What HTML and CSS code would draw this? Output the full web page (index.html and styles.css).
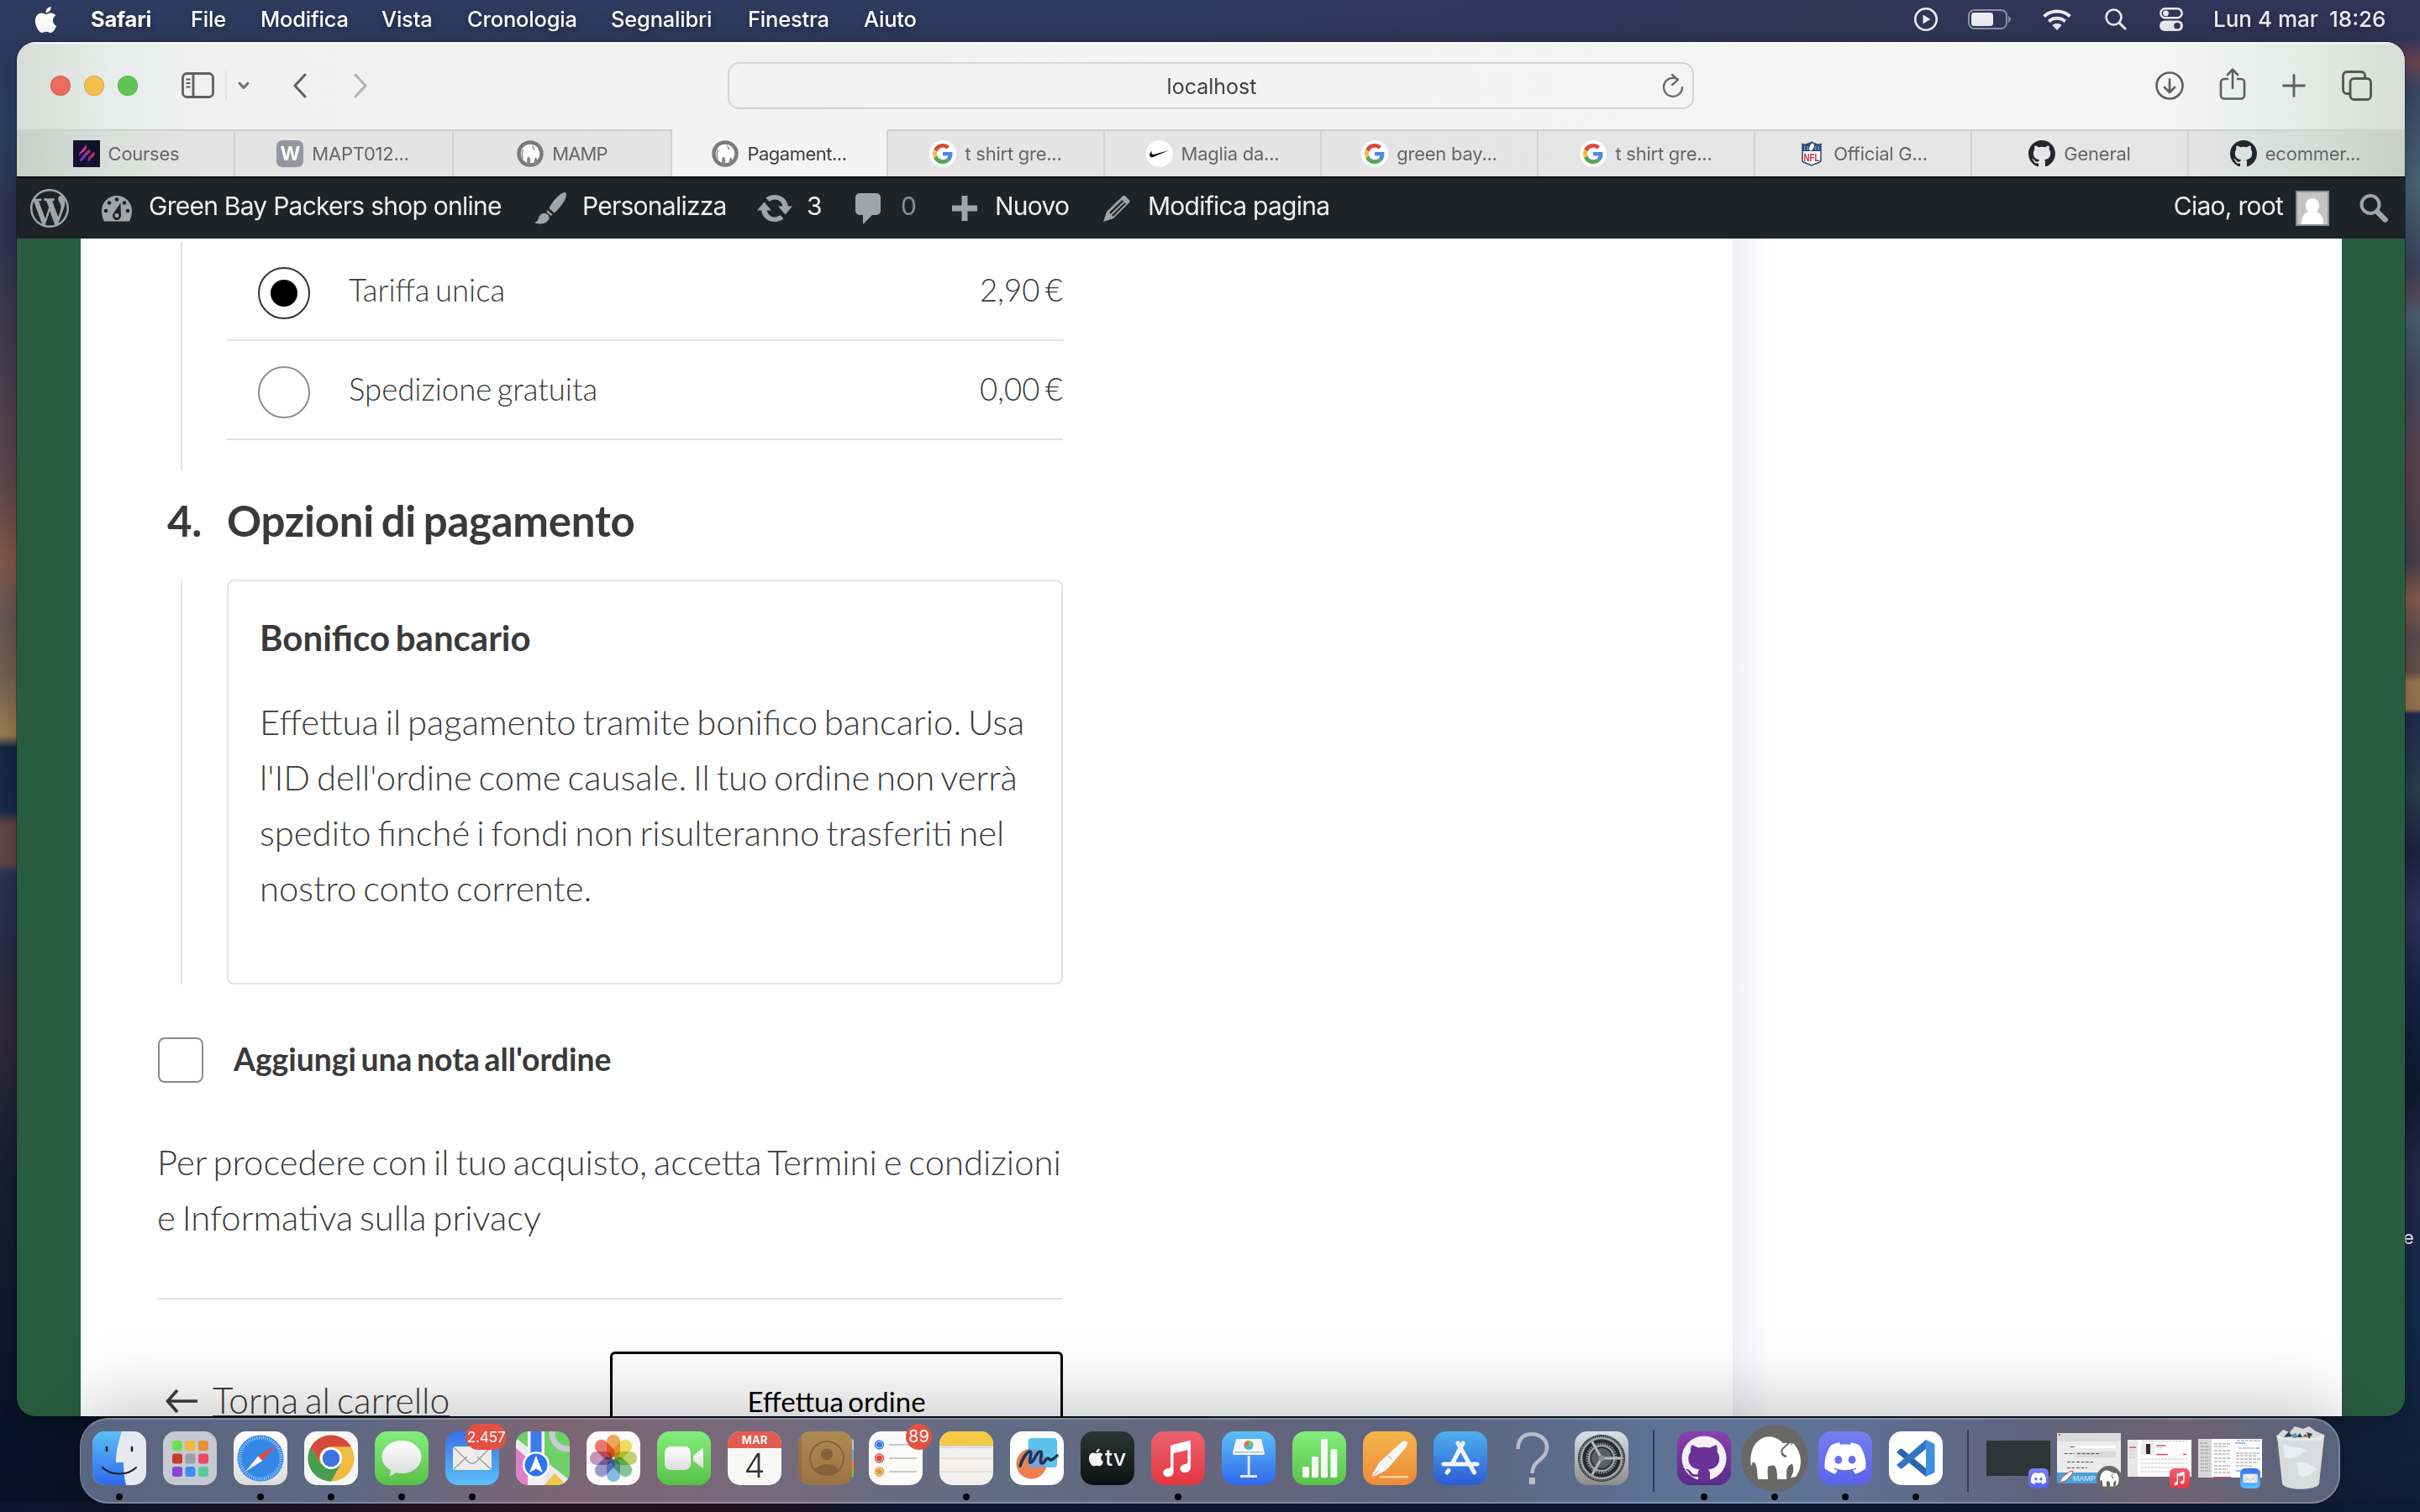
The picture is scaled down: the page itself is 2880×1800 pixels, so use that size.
FILE: index.html
```html
<!DOCTYPE html>
<html lang="it">
<head>
<meta charset="utf-8">
<title>Pagamento – Green Bay Packers shop online</title>
<link rel="stylesheet" href="styles.css">
</head>
<body>
<svg class="sprite" aria-hidden="true">
  <defs>
    <linearGradient id="g-green" x2="0" y2="1"><stop stop-color="#83ee7c"/><stop offset="1" stop-color="#58c148"/></linearGradient>
    <linearGradient id="g-blue" x2="0" y2="1"><stop stop-color="#3a6fe8"/><stop offset="1" stop-color="#5cc0f8"/></linearGradient>
    <linearGradient id="g-sky" x2="0" y2="1"><stop stop-color="#5bbff8"/><stop offset="1" stop-color="#3068ec"/></linearGradient>
    <linearGradient id="g-white" x2="0" y2="1"><stop stop-color="#ffffff"/><stop offset="1" stop-color="#dcdcdc"/></linearGradient>
    <linearGradient id="g-red" x2="0" y2="1"><stop stop-color="#ec6272"/><stop offset="1" stop-color="#e4363e"/></linearGradient>
    <linearGradient id="g-indigo" x2="0" y2="1"><stop stop-color="#7480f0"/><stop offset="1" stop-color="#5a62ea"/></linearGradient>
    <linearGradient id="g-orange" x2="0" y2="1"><stop stop-color="#f3b64b"/><stop offset="1" stop-color="#ed8b39"/></linearGradient>
    <linearGradient id="g-purple" x2="0" y2="1"><stop stop-color="#8a3fb0"/><stop offset="1" stop-color="#5a2c86"/></linearGradient>
    <linearGradient id="g-brown" x2="0" y2="1"><stop stop-color="#b08a53"/><stop offset="1" stop-color="#9a7342"/></linearGradient>
    <linearGradient id="g-steel" x2="0" y2="1"><stop stop-color="#d5e0e6"/><stop offset="1" stop-color="#8f8d8a"/></linearGradient>
    <linearGradient id="g-black" x2="0" y2="1"><stop stop-color="#2b3632"/><stop offset="1" stop-color="#0c1012"/></linearGradient>
    <linearGradient id="g-store" x2="0" y2="1"><stop stop-color="#4fb0ee"/><stop offset="1" stop-color="#2c5bd4"/></linearGradient>
    <clipPath id="tile"><rect width="64" height="64" rx="15"/></clipPath>
  </defs>
  <symbol id="apple" viewBox="0 0 24 24"><path d="M12.152 6.896c-.948 0-2.415-1.078-3.96-1.04-2.04.027-3.91 1.183-4.961 3.014-2.117 3.675-.546 9.103 1.519 12.09 1.013 1.454 2.208 3.09 3.792 3.039 1.52-.065 2.09-.987 3.935-.987 1.831 0 2.35.987 3.96.948 1.637-.026 2.676-1.48 3.676-2.948 1.156-1.688 1.636-3.325 1.662-3.415-.039-.013-3.182-1.221-3.22-4.857-.026-3.04 2.48-4.494 2.597-4.559-1.429-2.09-3.623-2.324-4.39-2.376-2-.156-3.675 1.09-4.61 1.09zM15.53 3.83c.843-1.012 1.4-2.427 1.245-3.83-1.207.052-2.662.805-3.532 1.818-.78.896-1.454 2.338-1.273 3.714 1.338.104 2.715-.688 3.559-1.701"/></symbol>
  <symbol id="google" viewBox="0 0 32 32">
    <circle cx="16" cy="16" r="16" fill="#fff"/>
    <g transform="translate(4 4) scale(.5)">
      <path fill="#d94b3d" d="M24 9.5c3.54 0 6.71 1.22 9.21 3.6l6.85-6.85C35.9 2.38 30.47 0 24 0 14.62 0 6.51 5.38 2.56 13.22l7.98 6.19C12.43 13.72 17.74 9.5 24 9.5z"/>
      <path fill="#5186ec" d="M46.98 24.55c0-1.57-.15-3.09-.38-4.55H24v9.02h12.94c-.58 2.96-2.26 5.48-4.78 7.18l7.73 6c4.51-4.18 7.09-10.36 7.09-17.65z"/>
      <path fill="#f2bd42" d="M10.53 28.59c-.48-1.45-.76-2.99-.76-4.59s.27-3.14.76-4.59l-7.98-6.19C.92 16.46 0 20.12 0 24c0 3.88.92 7.54 2.56 10.78l7.97-6.19z"/>
      <path fill="#58a55c" d="M24 48c6.48 0 11.93-2.13 15.89-5.81l-7.73-6c-2.15 1.45-4.92 2.3-8.16 2.3-6.26 0-11.57-4.22-13.47-9.91l-7.98 6.19C6.51 42.62 14.62 48 24 48z"/>
    </g>
  </symbol>
  <symbol id="github" viewBox="0 0 16 16"><path d="M8 0C3.58 0 0 3.58 0 8c0 3.54 2.29 6.53 5.47 7.59.4.07.55-.17.55-.38 0-.19-.01-.82-.01-1.49-2.01.37-2.53-.49-2.69-.94-.09-.23-.48-.94-.82-1.13-.28-.15-.68-.52-.01-.53.63-.01 1.08.58 1.23.82.72 1.21 1.87.87 2.33.66.07-.52.28-.87.51-1.07-1.78-.2-3.64-.89-3.64-3.95 0-.87.31-1.59.82-2.15-.08-.2-.36-1.02.08-2.12 0 0 .67-.21 2.2.82.64-.18 1.32-.27 2-.27s1.36.09 2 .27c1.53-1.04 2.2-.82 2.2-.82.44 1.1.16 1.92.08 2.12.51.56.82 1.27.82 2.15 0 3.07-1.87 3.75-3.65 3.95.29.25.54.73.54 1.48 0 1.07-.01 1.93-.01 2.2 0 .21.15.46.55.38A8.01 8.01 0 0 0 16 8c0-4.42-3.58-8-8-8z"/></symbol>
  <symbol id="elephant" viewBox="0 0 80 80">
    <circle cx="40" cy="40" r="40" fill="#686866"/>
    <path fill="#fff" d="M12 50C9 33 16 19 28 15c8-2 15 1 21 6l-2 8c-1 5 2 9 6 10 2-8 5-13 9-17 5 5 9 13 9 22 0 7-2 13-6 18l-6 1c4-6 4-12 2-16-3 0-5 2-6 5-2 5 0 9-1 13H43c0-6 0-12-3-16-3-1-6 0-8 1-1 5 0 10 0 15H20c-1-7 0-14-4-20-2-2-3 2-4 5z"/>
    <path fill="#fff" d="M46 22l14 0-5 16-8-4z"/>
    <path fill="none" stroke="#686866" stroke-width="2" d="M59 20l-10 9c-2 4 1 8 5 9"/>
  </symbol>
  <symbol id="mamp-tab" viewBox="0 0 32 32">
    <circle cx="16" cy="16" r="13.500" fill="#fff" stroke="#7a7a7a" stroke-width="4.500"/>
    <path fill="#868686" d="M12 30c0-4 0-8 1-10h2c2 3 1 7 1 10zM21 29c-1-3 0-8 2-9l2 5-1 4zM18 4l4 8-3-2z"/>
    <path fill="none" stroke="#a5a5a5" stroke-width="2" d="M7 11c-1 4-1 8 0 12"/>
  </symbol>
  <symbol id="discord" viewBox="0 0 64 64">
    <rect width="64" height="64" rx="15" fill="url(#g-indigo)"/>
    <path fill="#fff" transform="translate(7.5 7.5) scale(2.04)" d="M20.317 4.3698a19.7913 19.7913 0 00-4.8851-1.5152.0741.0741 0 00-.0785.0371c-.211.3753-.4447.8648-.6083 1.2495-1.8447-.2762-3.68-.2762-5.4868 0-.1636-.3933-.4058-.8742-.6177-1.2495a.077.077 0 00-.0785-.037 19.7363 19.7363 0 00-4.8852 1.515.0699.0699 0 00-.0321.0277C.5334 9.0458-.319 13.5799.0992 18.0578a.0824.0824 0 00.0312.0561c2.0528 1.5076 4.0413 2.4228 5.9929 3.0294a.0777.0777 0 00.0842-.0276c.4616-.6304.8731-1.2952 1.226-1.9942a.076.076 0 00-.0416-.1057c-.6528-.2476-1.2743-.5495-1.8722-.8923a.077.077 0 01-.0076-.1277c.1258-.0943.2517-.1923.3718-.2914a.0743.0743 0 01.0776-.0105c3.9278 1.7933 8.18 1.7933 12.0614 0a.0739.0739 0 01.0785.0095c.1202.099.246.1981.3728.2924a.077.077 0 01-.0066.1276 12.2986 12.2986 0 01-1.873.8914.0766.0766 0 00-.0407.1067c.3604.698.7719 1.3628 1.225 1.9932a.076.076 0 00.0842.0286c1.961-.6067 3.9495-1.5219 6.0023-3.0294a.077.077 0 00.0313-.0552c.5004-5.177-.8382-9.6739-3.5485-13.6604a.061.061 0 00-.0312-.0286zM8.02 15.3312c-1.1825 0-2.1569-1.0857-2.1569-2.419 0-1.3332.9555-2.4189 2.157-2.4189 1.2108 0 2.1757 1.0952 2.1568 2.419 0 1.3332-.9555 2.4189-2.1569 2.4189zm7.9748 0c-1.1825 0-2.1569-1.0857-2.1569-2.419 0-1.3332.9554-2.4189 2.1569-2.4189 1.2108 0 2.1757 1.0952 2.1568 2.419 0 1.3332-.946 2.4189-2.1568 2.4189Z"/>
  </symbol>
  <symbol id="music" viewBox="0 0 64 64">
    <rect width="64" height="64" rx="15" fill="url(#g-red)"/>
    <path fill="#fff" d="M24 16.500l21-5.500c1-.3 2 .3 2 1.500v30c0 4-3 6.500-7 6.500-3 0-5.500-2-5.500-4.500 0-3 2.500-5 6-5.500 2-.3 3-.8 3-2V22l-17 4v22c0 4-3 6-6.500 6-3.300 0-5.700-2-5.700-4.500 0-3 2.400-5 5.700-5.500 2-.3 3-.8 3-2V18.500c0-1 .2-1.700 1-2z"/>
  </symbol>
  <symbol id="mail" viewBox="0 0 64 64">
    <rect width="64" height="64" rx="15" fill="url(#g-blue)"/>
    <rect x="9" y="18" width="46" height="28" rx="3" fill="#ededed"/>
    <path fill="none" stroke="#9b9b9b" stroke-width="1.300" d="M10 45l16-15M54 45L38 30M10 19l17 17c3 3 7 3 10 0l17-17"/>
  </symbol>
</svg>

<header class="menubar">
  <nav class="menus">
    <svg class="apple" viewBox="0 0 24 24" fill="#fff"><use href="#apple"/></svg>
    <b>Safari</b><span>File</span><span>Modifica</span><span>Vista</span><span>Cronologia</span><span>Segnalibri</span><span>Finestra</span><span>Aiuto</span>
  </nav>
  <div class="status">
    <svg width="28" height="28" viewBox="0 0 28 28"><circle cx="14" cy="14" r="12.700" fill="none" stroke="#ececf2" stroke-width="2.600"/><path fill="#ececf2" d="M10.500 8.500v11l9-5.500z"/></svg>
    <svg width="51" height="24" viewBox="0 0 51 24"><rect x="1" y="1" width="45" height="22" rx="6.500" fill="none" stroke="#8d90ab" stroke-width="2"/><rect x="4" y="4" width="26" height="16" rx="3.500" fill="#ececf2"/><path fill="#8d90ab" d="M48 8c4 2 4 6 0 8z"/></svg>
    <svg width="34" height="25" viewBox="0 0 34 25" fill="none" stroke="#ececf2" stroke-width="4"><path d="M1.500 8.500c8.500-8 22.500-8 31 0"/><path d="M7.300 14.500c5.500-5 14-5 19.500 0"/><path fill="#ececf2" stroke="none" d="M17 25l-5.500-6c3-2.600 8-2.600 11 0z"/></svg>
    <svg width="26" height="26" viewBox="0 0 26 26" fill="none" stroke="#ececf2" stroke-width="2.600"><circle cx="10.500" cy="10.500" r="9"/><path stroke-width="3" stroke-linecap="round" d="M17.500 17.500l6.500 6.500"/></svg>
    <svg width="28" height="28" viewBox="0 0 28 28"><rect x="1.300" y="1.300" width="25.400" height="11" rx="5.500" fill="none" stroke="#ececf2" stroke-width="2.400"/><circle cx="7.500" cy="6.800" r="3.400" fill="#ececf2"/><rect y="15.500" width="28" height="12.500" rx="6.200" fill="#ececf2"/><circle cx="21" cy="21.800" r="3.800" fill="#31355a"/></svg>
    <span>Lun 4 mar</span><span>18:26</span>
  </div>
</header>

<span class="desktop-label">e</span>

<main class="window">
  <div class="toolbar">
    <div class="lights"><i class="close"></i><i class="min"></i><i class="max"></i></div>
    <svg class="ic-sidebar" width="40" height="32" viewBox="0 0 40 32" fill="none" stroke="#5f615f" stroke-width="2.800"><rect x="1.500" y="1.500" width="36" height="28" rx="5"/><path d="M14 2v27"/><path stroke-width="2" d="M5.500 8.500h5M5.500 13h5M5.500 17.500h5"/></svg>
    <i class="sep"></i>
    <svg class="ic-chev" width="14" height="10" viewBox="0 0 14 10" fill="none" stroke="#6c6c6c" stroke-width="2.800" stroke-linecap="round" stroke-linejoin="round"><path d="M2 2l5 5.500L12 2"/></svg>
    <svg class="ic-back" width="16" height="30" viewBox="0 0 16 30" fill="none" stroke="#5f5f5f" stroke-width="3" stroke-linecap="round" stroke-linejoin="round"><path d="M14 2L2 15l12 13"/></svg>
    <svg class="ic-fwd" width="16" height="30" viewBox="0 0 16 30" fill="none" stroke="#b2b2b2" stroke-width="3" stroke-linecap="round" stroke-linejoin="round"><path d="M2 2l12 13L2 28"/></svg>
    <div class="url"><span>localhost</span>
      <svg width="26" height="30" viewBox="0 0 26 30" fill="none" stroke="#6b6b6b" stroke-width="2.400" stroke-linecap="round" stroke-linejoin="round"><path d="M18.500 7.300A11 11 0 1 0 24 17"/><path d="M12 2l7 6-7 6"/></svg>
    </div>
    <div class="tools">
      <svg class="download" width="34" height="36" viewBox="0 0 34 36" fill="none" stroke="#5d5f5d" stroke-width="2.600" stroke-linecap="round" stroke-linejoin="round"><circle cx="17" cy="18" r="15.500"/><path d="M17 10.500V26M11 20l6 6 6-6"/></svg>
      <svg class="share" width="32" height="38" viewBox="0 0 32 38" fill="none" stroke="#5d5f5d" stroke-width="2.600" stroke-linecap="round" stroke-linejoin="round"><path d="M10 13H6a4 4 0 0 0-4 4v15.500a4 4 0 0 0 4 4h20a4 4 0 0 0 4-4V17a4 4 0 0 0-4-4h-4M16 24V2M10 8l6-6.300L22 8"/></svg>
      <svg width="28" height="28" viewBox="0 0 28 28" fill="none" stroke="#5d5f5d" stroke-width="2.800" stroke-linecap="round"><path d="M14 1.500v25M1.500 14h25"/></svg>
      <svg width="36" height="36" viewBox="0 0 36 36" fill="none" stroke="#535653" stroke-width="2.800" stroke-linejoin="round"><rect x="10" y="9.500" width="24.500" height="25" rx="4.500"/><path d="M9.500 27.500H6A4.500 4.500 0 0 1 1.500 23V6A4.500 4.500 0 0 1 6 1.500h17A4.500 4.500 0 0 1 27.500 6v3"/></svg>
    </div>
  </div>

  <nav class="tabs">
    <a class="tab"><svg viewBox="0 0 32 32"><rect width="32" height="32" fill="#13102a"/><path fill="#c23c78" d="M16 5v5l-4 4.500-5 1z"/><path fill="#6a2cc4" d="M7 15l5-1-5 5z"/><path fill="#b8386f" d="M25.500 13v4.500L19 24l-1-3z"/><path fill="#6a2cc4" d="M19 19l-2 8 4-4z"/><path stroke="#b2356f" stroke-width="3.200" d="M12 20l8-8"/><path stroke="#6d2fc6" stroke-width="3.200" d="M8.500 24.500l6-6.500"/></svg><span>Courses</span></a>
    <a class="tab"><i class="w-icon">W</i><span>MAPT012...</span></a>
    <a class="tab snug"><svg viewBox="0 0 32 32"><use href="#mamp-tab"/></svg><span>MAMP</span></a>
    <a class="tab active"><svg viewBox="0 0 32 32"><use href="#mamp-tab"/></svg><span>Pagament...</span></a>
    <a class="tab"><svg viewBox="0 0 32 32"><use href="#google"/></svg><span>t shirt gre...</span></a>
    <a class="tab"><svg viewBox="0 0 32 32"><circle cx="16" cy="16" r="16" fill="#fff"/><path fill="#111" transform="translate(4 4.500) scale(.97)" d="M24 7.800L6.442 15.276c-1.456.616-2.679.925-3.668.925-1.120 0-1.933-.392-2.437-1.177-.317-.504-.41-1.143-.28-1.918.13-.775.476-1.600 1.036-2.478.467-.71 1.232-1.643 2.297-2.800a6.122 6.122 0 00-.784 1.848c-.28 1.195-.028 2.072.756 2.632.373.261.886.392 1.540.392.522 0 1.110-.084 1.764-.252L24 7.800z"/></svg><span>Maglia da...</span></a>
    <a class="tab"><svg viewBox="0 0 32 32"><use href="#google"/></svg><span>green bay...</span></a>
    <a class="tab"><svg viewBox="0 0 32 32"><use href="#google"/></svg><span>t shirt gre...</span></a>
    <a class="tab"><svg viewBox="0 0 32 32"><path fill="#fff" stroke="#27477d" stroke-width="1.500" d="M5 4.500c3 1.200 5 .8 7-.5 1.500 0 3-1 4-2 1 1 2.500 2 4 2 2 1.300 4 1.700 7 .5v20c-1 3-7 2.500-11 5.500-4-3-10-2.500-11-5.500z"/><path fill="#27477d" d="M5 5c3 1.200 5 .8 7-.5 1.500 0 3-1 4-2 1 1 2.500 2 4 2 2 1.300 4 1.700 7 .5v8H5z"/><ellipse cx="16" cy="8" rx="2.500" ry="4.500" fill="#fff" transform="rotate(20 16 8)"/><path stroke="#fff" stroke-dasharray="1.500 2" d="M7 8h5M7 10.500h5M20 8h5M20 10.500h5"/><text x="16" y="24.500" text-anchor="middle" textLength="19" lengthAdjust="spacingAndGlyphs" class="nfl">NFL</text></svg><span>Official G...</span></a>
    <a class="tab"><svg viewBox="0 0 16 16" fill="#23262c"><use href="#github"/></svg><span>General</span></a>
    <a class="tab"><svg viewBox="0 0 16 16" fill="#23262c"><use href="#github"/></svg><span>ecommer...</span></a>
  </nav>

  <div class="adminbar">
    <svg width="46" height="46" viewBox="0 0 20 20"><path d="M20 10c0-5.510-4.490-10-10-10C4.480 0 0 4.490 0 10c0 5.520 4.480 10 10 10 5.510 0 10-4.480 10-10zM7.780 15.370L4.370 6.220c.55-.02 1.170-.08 1.170-.08.5-.06.44-1.130-.06-1.110 0 0-1.450.11-2.370.11-.18 0-.37 0-.58-.01C4.120 2.690 6.870 1.110 10 1.110c2.330 0 4.450.87 6.050 2.340-.68-.11-1.650.39-1.650 1.580 0 .74.45 1.360.9 2.100.35.61.55 1.360.55 2.460 0 1.490-1.400 5-1.400 5l-3.030-8.370c.54-.02.82-.17.82-.17.5-.05.44-1.250-.06-1.220 0 0-1.440.12-2.380.12-.87 0-2.330-.12-2.330-.12-.5-.03-.56 1.200-.06 1.220l.92.08 1.260 3.410zM17.410 10c.24-.64.74-1.870.43-4.250.7 1.290 1.050 2.710 1.050 4.250 0 3.290-1.730 6.240-4.400 7.780.97-2.590 1.940-5.200 2.920-7.780zM6.100 18.090C3.120 16.650 1.110 13.530 1.110 10c0-1.300.23-2.480.72-3.590C3.250 10.300 4.670 14.200 6.100 18.090zm4.030-6.630l2.580 6.980c-.86.29-1.760.45-2.710.45-.79 0-1.570-.11-2.290-.33.81-2.380 1.620-4.740 2.420-7.100z"/></svg>
    <svg width="36" height="31" viewBox="0 0 36 31"><path d="M18 0a18 18 0 0 1 18 18c0 5-1.200 9-3 12.500H3C1.200 27 0 23 0 18A18 18 0 0 1 18 0z"/><g fill="#1d2327"><circle cx="18" cy="4.500" r="2.300"/><circle cx="9" cy="8.500" r="2.300"/><circle cx="27" cy="8.500" r="2.300"/><circle cx="5" cy="18" r="2.300"/><circle cx="31" cy="18" r="2.300"/><path d="M22.500 8.500L14 21a5 5 0 1 0 9 3z"/></g><circle cx="18" cy="23.500" r="2.500"/></svg>
    <span>Green Bay Packers shop online</span>
    <svg width="38" height="38" viewBox="0 0 38 38"><path d="M36.500 0c2 1 1.800 3.500.5 7-2 5.500-8 13-13.500 17.500l-6-5.500C20.500 12 27.500 4 33 1c1.500-.8 2.600-1.300 3.500-1zM15.500 21l6 5.500-2 1.500-5-4.500zM13 25c2.500.5 4.500 2.500 4.500 5 0 4.500-5 7.500-10 7.500-2.500 0-5.500-.5-7.500-1.500 3-1 4-2.500 5-5.500 1-3.500 4-6.500 8-5.500z"/></svg>
    <span>Personalizza</span>
    <svg width="42" height="32" viewBox="0 0 42 32"><path d="M21 0c8.300 0 15 5.800 16 13.500h5l-8.500 10-8.500-10h5.500C29.500 9 26 5.500 21 5.500c-2.500 0-4.700 1-6.500 2.500l-4-4.500C13.500 1.200 17 0 21 0zM21 32c-8.300 0-15-5.800-16-13.500H0l8.500-10 8.500 10h-5.500C12.500 23 16 26.500 21 26.500c2.500 0 4.700-1 6.500-2.500l4 4.500C28.500 30.800 25 32 21 32z"/></svg>
    <span>3</span>
    <svg width="30" height="37" viewBox="0 0 30 37"><path d="M5 0h20a5 5 0 0 1 5 5v16a5 5 0 0 1-5 5h-5L9 37V26H5a5 5 0 0 1-5-5V5a5 5 0 0 1 5-5z"/></svg>
    <span class="dim">0</span>
    <svg width="30" height="30" viewBox="0 0 30 30"><path d="M11.500 0h7v11.500H30v7H18.500V30h-7V18.500H0v-7h11.500z"/></svg>
    <span>Nuovo</span>
    <svg width="32" height="32" viewBox="0 0 32 32"><path fill-rule="evenodd" d="M23 1.500c1-1 2.300-1 3.300 0l4.500 4.500c1 1 1 2.300 0 3.300L12 28 0 32l4-12zM22.500 6L7 21l1.700 1.700L24.200 7.700zM25.500 9L10 24.300l1.700 1.500L27 10.500z"/></svg>
    <span>Modifica pagina</span>
    <div class="account">
      <span>Ciao, root</span>
      <svg class="avatar" width="40" height="42" viewBox="0 0 40 42"><rect width="40" height="42" fill="#8c8f94"/><rect x="2" y="2" width="36" height="38" fill="#c4c4c4"/><path fill="#fff" d="M20 9c5 0 8 4 8 9 0 3-1.300 5.500-3 7 5 1.500 8 7 8.500 15h-27C7 32 10 26.500 15 25c-1.700-1.500-3-4-3-7 0-5 3-9 8-9z"/></svg>
      <svg width="34" height="34" viewBox="0 0 34 34" fill="none" stroke="#a0a5aa"><circle cx="13" cy="12.500" r="10.500" stroke-width="4"/><path stroke-width="6.500" stroke-linecap="round" d="M22 22l8.500 8.500"/></svg>
    </div>
  </div>

  <div class="viewport">
    <div class="site">
      <form class="checkout">
        <section class="step shipping">
          <label class="rate"><i class="radio on"></i><span>Tariffa unica</span><em>2,90 €</em></label>
          <label class="rate"><i class="radio"></i><span>Spedizione gratuita</span><em>0,00 €</em></label>
        </section>
        <h2><span>4.</span><span>Opzioni di pagamento</span></h2>
        <section class="step">
          <div class="method">
            <h3>Bonifico bancario</h3>
            <p>Effettua il pagamento tramite bonifico bancario. Usa<br>l'ID dell'ordine come causale. Il tuo ordine non verrà<br>spedito finché i fondi non risulteranno trasferiti nel<br>nostro conto corrente.</p>
          </div>
        </section>
        <label class="note"><i class="box"></i><span>Aggiungi una nota all'ordine</span></label>
        <p class="terms">Per procedere con il tuo acquisto, accetta Termini e condizioni<br>e Informativa sulla privacy</p>
        <div class="actions">
          <a class="back"><svg width="38" height="30" viewBox="0 0 38 30" fill="none" stroke="#3d3d3d" stroke-width="3.600"><path d="M38 15H3M14 2L2.500 15 14 28"/></svg><span>Torna al carrello</span></a>
          <button type="button">Effettua ordine</button>
        </div>
      </form>
      <aside></aside>
    </div>
  </div>
</main>

<ul class="dock">
  <li class="running"><svg viewBox="0 0 64 64"><g clip-path="url(#tile)"><rect width="64" height="64" fill="#e6eaf0"/><path fill="url(#g-sky)" d="M0 0h35c-4 12-7 24-7 37h9c0 10 1 19 3 27H0z"/></g><path fill="none" stroke="#16202c" stroke-width="2.600" stroke-linecap="round" d="M17 19v4M47 19v4"/><path fill="none" stroke="#16202c" stroke-width="2" stroke-linecap="round" d="M12 43c10 10 30 10 40 0"/></svg></li>
  <li><svg viewBox="0 0 64 64"><rect width="64" height="64" rx="15" fill="#c6c9d2"/><g><rect x="11" y="11" width="12" height="12" rx="3" fill="#71dd52"/><rect x="26.500" y="11" width="12" height="12" rx="3" fill="#f0b93f"/><rect x="42" y="11" width="12" height="12" rx="3" fill="#e78f36"/><rect x="11" y="26.500" width="12" height="12" rx="3" fill="#c93a2c"/><rect x="26.500" y="26.500" width="12" height="12" rx="3" fill="#9aa0a5"/><rect x="42" y="26.500" width="12" height="12" rx="3" fill="#ea4b62"/><rect x="11" y="42" width="12" height="12" rx="3" fill="#8a46cf"/><rect x="26.500" y="42" width="12" height="12" rx="3" fill="#3d8df0"/><rect x="42" y="42" width="12" height="12" rx="3" fill="#5cc8a0"/></g></svg></li>
  <li class="running"><svg viewBox="0 0 64 64"><rect width="64" height="64" rx="15" fill="url(#g-white)"/><circle cx="32" cy="32" r="27.500" fill="#3387e6"/><circle cx="32" cy="32" r="24.500" fill="none" stroke="#bcdcfa" stroke-width="4" stroke-dasharray=".8 1.760"/><path fill="#e04a3c" d="M51 16L29 29.500l5.500 5.500z"/><path fill="#f1f1f1" d="M14 48l15-18.500 5.500 5.500z"/></svg></li>
  <li class="running"><svg viewBox="0 0 64 64"><rect width="64" height="64" rx="15" fill="#f7f7f8"/><circle cx="32" cy="32" r="27.500" fill="#f1bb42"/><path fill="#4a9c50" d="M8.200 18.200a27.500 27.500 0 0 0 23.800 41.300L43.500 39 20 39z"/><path fill="#d54a3b" d="M8.200 18.200a27.500 27.500 0 0 1 47.600 0H32a13.800 13.800 0 0 0-12 20.800z"/><circle cx="32" cy="32" r="13" fill="#fff"/><circle cx="32" cy="32" r="10.300" fill="#3f74e0"/></svg></li>
  <li class="running"><svg viewBox="0 0 64 64"><rect width="64" height="64" rx="15" fill="url(#g-green)"/><path fill="url(#g-white)" d="M32 11c13 0 23.500 8.500 23.500 19.500S45 50 32 50c-2.500 0-5-.3-7-1-2 2-5 4-8 4 1.500-2 2-4 1.500-7C12.500 42.500 8.500 37 8.500 30.500 8.500 19.500 19 11 32 11z"/></svg></li>
  <li class="running"><svg viewBox="0 0 64 64"><use href="#mail"/></svg><b class="badge wide">2.457</b></li>
  <li><svg viewBox="0 0 64 64"><g clip-path="url(#tile)"><rect width="64" height="64" fill="#6fd069"/><path fill="#e9e9ee" d="M0 8l64 50v6H0z"/><path fill="#dc7fc6" d="M0 20l14 12v32H0z"/><path fill="#f0c845" d="M34 64l12-14 14 14z"/><path fill="#f2f2f5" d="M14 0h20v64H14z"/><path fill="#3b7bea" d="M17.500 0h13v40h-13z"/><circle cx="62" cy="2" r="19" fill="none" stroke="#c9ccd2" stroke-width="7"/></g><circle cx="24" cy="40" r="16" fill="#fff"/><circle cx="24" cy="40" r="13.500" fill="#2f74ea"/><path fill="#fff" d="M24 29l8 20-8-4.500L16 49z"/></svg></li>
  <li><svg viewBox="0 0 64 64"><rect width="64" height="64" rx="15" fill="#fbfbfb"/><g class="petals"><rect x="24" y="4" width="16" height="27" rx="8" fill="#f0972f"/><rect x="24" y="4" width="16" height="27" rx="8" fill="#eed93c" transform="rotate(45 32 32)"/><rect x="24" y="4" width="16" height="27" rx="8" fill="#b2cf48" transform="rotate(90 32 32)"/><rect x="24" y="4" width="16" height="27" rx="8" fill="#69b985" transform="rotate(135 32 32)"/><rect x="24" y="4" width="16" height="27" rx="8" fill="#6aaee0" transform="rotate(180 32 32)"/><rect x="24" y="4" width="16" height="27" rx="8" fill="#7f82c4" transform="rotate(225 32 32)"/><rect x="24" y="4" width="16" height="27" rx="8" fill="#b87fb4" transform="rotate(270 32 32)"/><rect x="24" y="4" width="16" height="27" rx="8" fill="#ea5a4a" transform="rotate(315 32 32)"/></g></svg></li>
  <li><svg viewBox="0 0 64 64"><rect width="64" height="64" rx="15" fill="url(#g-green)"/><rect x="9" y="18" width="31" height="28" rx="7" fill="url(#g-white)"/><path fill="url(#g-white)" d="M43 29l10-8c1-.8 2-.3 2 1v20c0 1.300-1 1.800-2 1l-10-8z"/></svg></li>
  <li><svg viewBox="0 0 64 64"><g clip-path="url(#tile)"><rect width="64" height="64" fill="#f8f8f7"/><rect width="64" height="20" fill="#e25c50"/></g><text x="32" y="15" class="cal-m">MAR</text><text x="32" y="54.500" class="cal-d">4</text></svg></li>
  <li><svg viewBox="0 0 64 64"><path fill="#c4c6c8" d="M58 9h5q3 0 3 3v10h-8z"/><path fill="#62a9e4" d="M58 22h8v12h-8z"/><path fill="#ea8a2f" d="M58 34h8v12h-8z"/><path fill="#6bcb5c" d="M58 46h8v6q0 3-3 3h-5z"/><rect width="64" height="64" rx="14" fill="url(#g-brown)"/><path fill="#80602f" opacity=".4" d="M4 5q-4 4-4 10v34q0 6 4 10z"/><circle cx="34" cy="32" r="20" fill="none" stroke="#7d5d33" stroke-width="1.600"/><circle cx="34" cy="27.500" r="7" fill="#83633a"/><path fill="#83633a" d="M20 46c3-9 25-9 28 0a20 20 0 0 1-28 0z"/></svg></li>
  <li><svg viewBox="0 0 64 64"><rect width="64" height="64" rx="15" fill="#fbfbfa"/><path stroke="#b9b9bb" stroke-width="1.500" d="M24 16h33M24 32h33M24 48h33"/><g stroke-width="1.400" fill="none"><circle cx="12.500" cy="16" r="5" stroke="#3575e8"/><circle cx="12.500" cy="32" r="5" stroke="#dd4b3d"/><circle cx="12.500" cy="48" r="5" stroke="#e7962f"/></g><circle cx="12.500" cy="16" r="3.500" fill="#3575e8"/><circle cx="12.500" cy="32" r="3.500" fill="#dd4b3d"/><circle cx="12.500" cy="48" r="3.500" fill="#e7962f"/></svg><b class="badge">89</b></li>
  <li class="running"><svg viewBox="0 0 64 64"><g clip-path="url(#tile)"><rect width="64" height="64" fill="#f2f1ee"/><rect width="64" height="16.500" fill="#f6ca45"/><path stroke="#c9b27a" d="M0 17h64"/><path stroke="#bdbdbd" stroke-dasharray="1.500 1.500" d="M1 19.500h63"/><path stroke="#d2d2d0" d="M0 32h64M0 48h64"/></g></svg></li>
  <li><svg viewBox="0 0 64 64"><rect width="64" height="64" rx="15" fill="#fff"/><circle cx="25.500" cy="38.500" r="18" fill="#ef7f4c"/><rect x="21.500" y="8" width="34.500" height="35" rx="4" fill="#5cc3ee"/><path fill="#7e9fd0" d="M21.500 21c10-2 19 4 21.800 14l-.3 8H25.500q-4 0-4-4z"/><path fill="none" stroke="#16365c" stroke-width="3.600" stroke-linecap="round" stroke-linejoin="round" d="M12 41c3-9 8-17 12-17 3 0-3 15 1 13 4-1 6-13 11-13 4 0-2 13 2 14 4 0 3-5 7-6 3 0 1 6 11-3"/></svg></li>
  <li><svg viewBox="0 0 64 64"><rect width="64" height="64" rx="15" fill="url(#g-black)"/><svg x="8" y="19.500" width="21" height="23" viewBox="0 0 24 24" fill="#f4f4f4"><use href="#apple"/></svg><text x="29" y="41" class="tv">tv</text></svg></li>
  <li class="running"><svg viewBox="0 0 64 64"><use href="#music"/></svg></li>
  <li><svg viewBox="0 0 64 64"><rect width="64" height="64" rx="15" fill="url(#g-sky)"/><path fill="#f3f5f8" d="M17 9h30l4 17q0 2-2 2H15q-2 0-2-2z"/><path fill="#b4bcc6" d="M15 24h34v1.500H15z"/><circle cx="32" cy="16.500" r="5.500" fill="#4bb8d8"/><path fill="#ef6a45" d="M32 16.500V11a5.500 5.500 0 0 0-5 7.500z"/><path fill="#7bcb50" d="M32 16.500V11a5.500 5.500 0 0 1 5.500 5.500z"/><path fill="#e3e6ea" d="M30.700 29h3v23h-3zM22 52h20v3H22z"/></svg></li>
  <li><svg viewBox="0 0 64 64"><rect width="64" height="64" rx="15" fill="url(#g-green)"/><g fill="#f5fbf4"><rect x="12" y="42" width="8" height="13" rx="1.500"/><rect x="23" y="30" width="8" height="25" rx="1.500"/><rect x="34" y="9" width="8" height="46" rx="1.500"/><rect x="45.500" y="21" width="8" height="34" rx="1.500"/></g></svg></li>
  <li><svg viewBox="0 0 64 64"><rect width="64" height="64" rx="15" fill="url(#g-orange)"/><path fill="#f8cf95" d="M20 53h34v2.500H20z"/><path fill="#f6f6f6" d="M52 12c1.700 1.700.8 4.500-1 7.500L27.500 46.500 14 53l-3.500 1.700 1-4L19 37.500l24.500-22.500c3.500-3.300 6.500-5 8.500-3z"/><path stroke="#9a9a9a" stroke-width="1" d="M29 28.500l5 5M11 54l7-7"/></svg></li>
  <li><svg viewBox="0 0 64 64"><rect width="64" height="64" rx="15" fill="url(#g-store)"/><g stroke="#f2f6fb" stroke-width="5" stroke-linecap="round"><path d="M35 14L22.500 38M29 14l19.500 35M12 39h40M18 46.500L16 49"/></g></svg></li>
  <li><svg viewBox="0 0 64 64"><path fill="none" stroke="#b9bcc9" stroke-width="4.500" d="M16.500 21C16.500 9 23 3.200 33 3.200S51 10 51 19c0 7-4 11-9 15.500-6 5-8.500 8-8.500 15.500"/><path fill="#b9bcc9" d="M29.800 55h7.200v8h-7.200z"/></svg></li>
  <li><svg viewBox="0 0 64 64"><rect width="64" height="64" rx="15" fill="url(#g-steel)"/><circle cx="32" cy="32" r="28" fill="#2a2c2d"/><circle cx="32" cy="32" r="24" fill="none" stroke="#a9abab" stroke-width="2.500"/><circle cx="32" cy="32" r="26" fill="none" stroke="#8c8e8e" stroke-width="2.500" stroke-dasharray="1.200 1.200"/><circle cx="32" cy="32" r="16" fill="none" stroke="#8a8d8e" stroke-width="5" stroke-dasharray="1.500 1.200"/><circle cx="32" cy="32" r="15" fill="none" stroke="#a2a5a6" stroke-width="2"/><circle cx="32" cy="32" r="12" fill="#5d6061"/><path stroke="#b9bbbb" stroke-width="3" d="M32 32h23M32 32L20.500 12M32 32L20.500 52"/><circle cx="32" cy="32" r="3.500" fill="#8a8c8c"/></svg></li>
  <li class="divider d1"></li>
  <li class="running"><svg viewBox="0 0 64 64"><rect width="64" height="64" rx="15" fill="url(#g-purple)"/><circle cx="32" cy="32" r="26.500" fill="#f4f2f6"/><path fill="#6a3296" d="M17.500 16l8 3.500c4-1 9-1 13 0l8-3.500c1.500 3 1.500 6 1 8.500 2.500 3 3 6.500 2.500 10-1 7-6 10-13 11 1.500 1.500 2 3 2 5.500v7.300c-5 1.400-9 1.400-14 0V54c-6 1-9-1-11-4.500-1-2-2-3-4-4 2-1.200 4.500 0 6 2.300 2 3 4 4 8.500 3.200 0-2.500.5-4 2-5.500-7-1-12-4-13-11-.5-3.500 0-7 2.500-10-.5-2.500 0-5.500 1.500-8.500z"/></svg></li>
  <li class="running"><svg class="big" viewBox="0 0 80 80"><use href="#elephant"/></svg></li>
  <li class="running"><svg viewBox="0 0 64 64"><use href="#discord"/></svg></li>
  <li class="running"><svg viewBox="0 0 64 64"><rect width="64" height="64" rx="15" fill="#fff"/><path fill="#2b66ae" d="M9 25l4-4q1.500-1 3 0l28 23v10z"/><path fill="#3575bd" d="M9 40l4 4q1.500 1 3 0l28-23V10z"/><path fill="#4291e0" d="M43 9.500l10.500 5q1 .8 1 2v31q0 1.300-1 2L43 54.500c1-1 1-2 1-3v-39c0-1-.3-2-1-3z"/></svg></li>
  <li class="divider d2"></li>
  <li class="thumbs">
    <div class="thumb"><svg viewBox="0 0 76 64"><path fill="#303437" d="M0 11h76v42H0z"/></svg><svg class="mini" viewBox="0 0 64 64"><use href="#discord"/></svg></div>
    <div class="thumb"><svg viewBox="0 0 76 64"><path fill="#ecebeb" d="M0 2h76v48H0z"/><path fill="#dcdbdb" d="M0 2h76v10H0z"/><path fill="#4c9fd3" d="M0 49h76v13H0z"/><path fill="#e05448" d="M2 3h2v2H2z"/><path fill="#fff" d="M22 17h48v3H22z"/><path fill="#dbdada" d="M22 24h48v7H22z"/><path stroke="#555" stroke-dasharray="4 1.500" d="M16 18.500h6M9 26.500h12M24 26.500h26M12 36.500h9M23 36.500h20M12 43.500h9M23 43.500h13"/><path fill="#f4f4f4" stroke="#d0553c" d="M3 61l3-6 9-7 4-1-1 4-8 8z"/><text x="19" y="59" class="mp">MAMP PRO 6</text></svg><svg class="mini round" viewBox="0 0 80 80"><use href="#elephant"/></svg></div>
    <div class="thumb"><svg viewBox="0 0 76 64"><path fill="#fdfdfd" d="M0 10h76v44H0z"/><path fill="#e8e6e8" d="M0 10h12v44H0z"/><path fill="#ececec" d="M16 14h16v14H16z"/><path fill="#3b2c34" d="M22 15h5v12h-5z"/><path stroke="#e0457f" stroke-width="1.500" d="M34 17h11M34 27.500h14M2 19h8M66 27.500h4"/><path stroke="#b9b9b9" stroke-width=".8" stroke-dasharray="3 1" d="M16 33h56M16 38h56M16 43h56M16 48h56M2 23h7M2 27h7M2 31h7M34 19.500h8M17 11.500h54"/></svg><svg class="mini" viewBox="0 0 64 64"><use href="#music"/></svg></div>
    <div class="thumb"><svg viewBox="0 0 76 64"><path fill="#fcfcfc" d="M0 9h76v46H0z"/><path fill="#d7d6da" d="M0 9h16v46H0z"/><path stroke="#8d8d92" stroke-width=".9" stroke-dasharray="4 1" d="M2 14h9M3 18h11M3 22h11M3 26h11M3 31h11M3 35h11M3 39h11M3 43h11M3 47h11M19 15h20M19 18h16M19 23h20M19 27h18M19 32h20M19 36h14M19 41h20M19 45h16M19 49h20M46 11h28M48 20h18M45 26h28M45 29h24M45 33h29M45 37h26M45 41h20"/><path stroke="#3f84e8" d="M44 14h12M68 20h5M45 47h10"/><path stroke="#e0457f" d="M18 54.500h21"/></svg><svg class="mini" viewBox="0 0 64 64"><use href="#mail"/></svg></div>
  </li>
  <li class="trash"><svg viewBox="0 0 58 76"><path fill="#d6d8da" d="M0 13l8-8 8 3 6-7 10 3 7-3 8 6 10 4-1 8H2z"/><path fill="#2f4250" d="M9 14l6-7 4 6zM36 8l7 2-4 6zM24 14l4-5 3 5z"/><path fill="#4a9db8" d="M18 11l5-2 3 5-6 1z"/><path fill="#a34a3c" d="M31 13l4-3 3 4z"/><path fill="#e0e2e2" fill-opacity=".95" d="M1 13c10 6 46 6 56 0l-6 56c-1 9-43 9-44 0z"/><path fill="#fff" opacity=".5" d="M8 22c12 5 20 3 30 8-10 2-12 12-28 8zM24 44c10-2 16 2 24 8-8 8-20 14-22 4z"/><path fill="none" stroke="#eef0f0" stroke-width="1.500" d="M1 12c2 6 54 6 56 0"/></svg></li>
</ul>
</body>
</html>
```
FILE: styles.css
```css
* { box-sizing: border-box; }

html, body {
  margin: 0;
  width: 2880px;
  height: 1800px;
  overflow: hidden;
}

body {
  font-family: Inter, "Liberation Sans", sans-serif;
  color: #fff;
  background:
    linear-gradient(90deg, #0b1530, #2a1622 20%, #24141f 30%, #101a38 38%, #0c1c34 100%) left bottom / 100% 12px no-repeat,
    linear-gradient(180deg, #2a3a60 0, #2a3a60 40px, #2c4466 150px, #2f3555 265px, #4a3f52 433px, #664a52 580px, #8a5c4a 668px, #6c5a5a 740px, #7a6454 803px, #a5845a 875px, #16284a 890px, #1a2a4c 965px, #6a4a4c 983px, #64484c 1028px, #2a3558 1040px, #2a2f4e 1106px, #332c3c 1218px, #1a1f36 1387px, #0c1830 1611px, #071226 1800px) left / 50% 100% no-repeat,
    linear-gradient(180deg, #35355a 0, #35355a 45px, #6b4650 74px, #3a4a68 107px, #4d6a7c 220px, #3b4560 320px, #5a4c5c 349px, #4c6478 377px, #434c66 444px, #5e4450 556px, #4a4250 668px, #8a5f50 713px, #5e4f55 758px, #6a554f 800px, #a07d55 812px, #9a7a55 844px, #202c50 850px, #2a4050 938px, #1b2444 1015px, #303560 1084px, #15254a 1174px, #0c1a30 1297px, #24284a 1387px, #142c50 1555px, #101c34 1800px) right / 50% 100% no-repeat;
}

.sprite { position: absolute; width: 0; height: 0; }
svg { display: block; flex: none; }

/* menu bar */
.menubar {
  display: flex;
  justify-content: space-between;
  align-items: center;
  height: 48px;
  padding: 0 38px 2px 42px;
  background: linear-gradient(90deg, #2d3b5f, #2e3a5d 50%, #31355a 66%, #2f3757 75%, #313457);
  font-size: 25.5px;
  font-weight: 500;
  letter-spacing: -.2px;
  line-height: 48px;
  white-space: nowrap;
  text-shadow: 0 2px 6px rgba(0, 0, 0, .35);
}
.menus {
  display: grid;
  grid-template-columns: 66px 119px 83px 144px 102px 171px 163px 138px auto;
  align-items: center;
}
.menus b { font-weight: 700; }
.apple { width: 31px; height: 31px; margin-left: -3px; }
.status {
  display: grid;
  grid-template-columns: 64px 89px 74px 65px 64px 138px 70px;
  align-items: center;
  color: #ececf2;
  font-size: 26px;
  letter-spacing: 0;
}

.desktop-label {
  position: absolute;
  left: 2860px;
  top: 1460px;
  font-size: 22px;
  line-height: 26px;
}

/* browser window */
.window {
  position: absolute;
  left: 20px;
  top: 50px;
  width: 2842px;
  height: 1636px;
  display: flex;
  flex-direction: column;
  border-radius: 22px;
  overflow: hidden;
  background: #285c3f;
  box-shadow: 0 0 0 1px rgba(0, 0, 0, .35), 0 10px 40px rgba(0, 0, 0, .35);
}
.toolbar {
  display: flex;
  align-items: center;
  height: 104px;
  padding: 0 39px 0 40px;
  background: linear-gradient(90deg, #d5ddd6, #e8ecea 4%, #f1f1f1 8%, #f4f4f4 50%, #f5f5f5 90%, #e6eae7 96%, #d5ddd6);
  box-shadow: inset 0 2px 0 rgba(255, 255, 255, .7);
}
.lights { display: flex; gap: 16px; }
.lights i { width: 24px; height: 24px; border-radius: 50%; border: 1px solid rgba(0, 0, 0, .12); }
.close { background: #ec6a5e; }
.min { background: #f4bf4f; }
.max { background: #61c554; }
.ic-sidebar { margin-left: 52px; }
.sep { width: 2px; height: 36px; margin-left: 12px; background: #e1e3e1; }
.ic-chev { margin-left: 13px; }
.ic-back { margin-left: 52px; }
.ic-fwd { margin-left: 56px; }
.url {
  display: flex;
  align-items: center;
  width: 1150px;
  height: 56px;
  margin-left: 429px;
  padding-right: 10px;
  border: 2px solid #d5d5d5;
  border-radius: 14px;
  color: #414141;
  font-size: 25px;
}
.url span { flex: 1; padding: 1px 0 0 38px; text-align: center; }
.tools { display: flex; align-items: center; gap: 43px; margin-left: auto; }
.download { margin-right: -1px; }
.share { margin-bottom: 4px; }

.tabs {
  display: grid;
  grid-template-columns: 260px 260px 260px 257px 258px 258px 258px 258px 258px 258px 257px;
  height: 56px;
  background: linear-gradient(90deg, #c7cfc8, #dcdfdc 4%, #e4e4e4 8%, #e6e6e6 90%, #d8dcd9 96%, #c7cfc8);
}
.tab {
  display: flex;
  align-items: center;
  justify-content: center;
  gap: 10px;
  border-top: 2px solid #cfcfcf;
  border-right: 2px solid #d2d2d2;
  color: #666;
  font-size: 22px;
  letter-spacing: -.25px;
}
.tab:first-child { padding-left: 2px; }
.tab:nth-child(2) { padding-right: 2px; }
.tab:last-child { border-right: 0; padding-right: 4px; }
.tab svg, .w-icon { width: 32px; height: 32px; }
.tab.active { background: #f4f4f4; border-top-color: #f4f4f4; color: #3e3e3e; letter-spacing: -.5px; }
.tab.snug { letter-spacing: -.9px; }
.w-icon {
  border-radius: 7px;
  background: #9496a2;
  color: #fff;
  font: 700 23px/32px Inter, sans-serif;
  letter-spacing: 0;
  text-align: center;
}
.nfl { font: 700 12px "Liberation Sans", sans-serif; letter-spacing: 0; fill: #c8323c; }

/* WordPress admin bar */
.adminbar {
  display: grid;
  grid-template-columns: 85px 56px 459px 57px 208px 59px 58px 54px 61px 51px 129px 53px 1fr auto;
  align-items: center;
  height: 74px;
  padding: 0 20px 0 16px;
  border-top: 2px solid #000;
  background: #1d2327;
  color: #f0f0f1;
  font-size: 30px;
  letter-spacing: -.75px;
  white-space: nowrap;
}
.adminbar svg { fill: #a0a5aa; }
.adminbar span { padding-bottom: 6px; }
.adminbar .dim { color: #8b8f94; }
.account { display: flex; align-items: center; gap: 15px; }
.account svg:last-child { margin-left: 21px; fill: none; }

/* shop page */
.viewport { flex: 1; padding: 0 75px 0 76px; overflow: hidden; }
.site {
  display: grid;
  grid-template-columns: 1966px 1fr;
  height: 1402px;
  background: #fff;
  color: #3a3a3a;
  font-family: Lato, sans-serif;
  font-weight: 300;
  word-spacing: -3.5px;
}
.site aside { background: linear-gradient(90deg, #f1f2f6, #fff 48px); }
.checkout { width: 1169px; padding: 4px 0 0 92px; }
.step { margin-left: 27px; padding-left: 53px; border-left: 2px solid #e3e3e3; }
.shipping { height: 272px; }
.rate {
  display: flex;
  align-items: center;
  height: 118px;
  padding-left: 37px;
  border-bottom: 2px solid #e3e3e3;
  font-size: 36.5px;
}
.rate span, .rate em { padding-bottom: 3px; }
.rate em { margin-left: auto; font-style: normal; }
.radio {
  width: 62px;
  height: 62px;
  margin: 5px 46px 0 0;
  border: 2px solid #8e8e8e;
  border-radius: 50%;
}
.radio.on { border-color: #333; background: radial-gradient(circle, #000 15.500px, #fff 16.500px); }
h2 {
  display: grid;
  grid-template-columns: 71px 1fr;
  align-items: center;
  height: 130px;
  margin: 0;
  padding: 0 0 11px 11px;
  font-size: 51px;
  font-weight: 700;
  letter-spacing: -.25px;
}
.method {
  height: 482px;
  padding: 34px 36px 0 37px;
  border: 2px solid #e3e3e3;
  border-radius: 8px;
}
.method h3 { margin: 0 0 34px; font-size: 42px; font-weight: 700; line-height: 66px; }
.method p, .terms { margin: 0; font-size: 41.8px; line-height: 66px; white-space: nowrap; }
.note { display: flex; align-items: center; gap: 36px; margin-top: 63px; font-size: 37.3px; font-weight: 700; }
.note span { padding-bottom: 3px; }
.box { width: 54px; height: 54px; border: 2px solid #8a8a86; border-radius: 8px; }
.terms { margin: 61px 0 0 -1px; padding-bottom: 63px; }
.actions {
  display: flex;
  justify-content: space-between;
  border-top: 2px solid #e3e3e3;
  padding-top: 62px;
}
.back { display: flex; align-items: center; gap: 18px; height: 118px; padding-left: 9px; font-size: 42.5px; }
.back span {
  padding-bottom: 3px;
  text-decoration: underline;
  text-decoration-thickness: 2px;
  text-underline-offset: 2px;
  text-decoration-skip-ink: none;
}
.actions button {
  width: 539px;
  height: 118px;
  padding: 0;
  border: 3px solid #000;
  border-radius: 6px 6px 0 0;
  background: none;
  color: #000;
  font: 400 33px Lato, sans-serif;
  word-spacing: -3px;
}

/* dock */
.dock {
  position: absolute;
  left: 95px;
  top: 1688px;
  display: flex;
  gap: 20px;
  width: 2690px;
  height: 102px;
  margin: 0;
  padding: 14px;
  border: 2px solid rgba(255, 255, 255, .22);
  border-left-width: 1px;
  border-radius: 34px;
  list-style: none;
  background: linear-gradient(90deg, #5a6580, #5d6983 12%, #7c6573 21%, #766a7c 30%, #5f6c84 41%, #66657c 51%, #5b6580 60%, #5d7294 70%, #5f7396 77%, #5f627b 87%, #6d6373 93%, #58637c);
  box-shadow: 0 0 90px 10px rgba(0, 0, 0, .25);
}
.dock li { position: relative; flex: none; width: 64px; height: 64px; }
.dock li > svg { width: 64px; height: 64px; overflow: visible; }
.petals rect { mix-blend-mode: multiply; opacity: .8; }
.running::after {
  content: "";
  position: absolute;
  left: 28px;
  top: 74px;
  width: 8px;
  height: 8px;
  border-radius: 50%;
  background: #02040c;
}
.badge {
  position: absolute;
  right: -11px;
  top: -9px;
  min-width: 31px;
  height: 31px;
  border-radius: 16px;
  background: #e45142;
  font-size: 20px;
  font-weight: 400;
  line-height: 31px;
  text-align: center;
}
.badge.wide { right: -9px; width: 49px; font-size: 17.5px; letter-spacing: -.4px; }
.dock .divider { width: 18px; height: 74px; margin-top: -2px; }
.dock .d2 { width: 12px; }
.divider::before { content: ""; display: block; width: 2px; height: 74px; margin-left: 9px; background: #2a3b62; }
.dock li > svg.big { width: 80px; height: 80px; margin: -8px; }
.dock .thumbs { display: flex; gap: 8px; width: 328px; }
.thumb { position: relative; width: 76px; height: 64px; }
.thumb > svg { width: 76px; height: 64px; }
.thumb .mini { position: absolute; right: 2px; bottom: -4px; width: 24px; height: 24px; }
.thumb .mini.round { right: -1px; bottom: -7px; width: 30px; height: 30px; }
.dock .trash { width: 58px; margin: -7px 0 0 -3px; }
.dock .trash > svg { width: 58px; height: 76px; }
.cal-m { font: 700 13px Inter, sans-serif; fill: #fff; text-anchor: middle; }
.cal-d { font: 300 40px Inter, sans-serif; fill: #333; text-anchor: middle; }
.tv { font: 500 27px Inter, sans-serif; fill: #f4f4f4; }
.mp { font: 400 9px "Liberation Sans", sans-serif; fill: #e4f2fb; }
```
